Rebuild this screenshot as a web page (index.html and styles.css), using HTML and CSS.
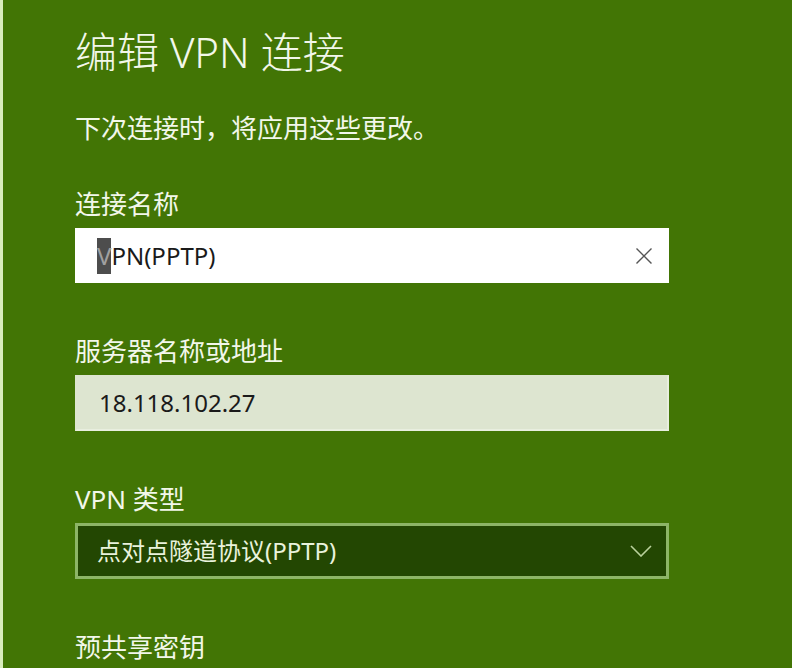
FILE: index.html
```html
<!DOCTYPE html>
<html lang="zh-CN">
<head>
<meta charset="utf-8">
<link rel="stylesheet" href="styles.css">
</head>
<body>
<div class="panel">
  <h1 class="title">编辑 VPN 连接</h1>
  <p class="subtitle">下次连接时，将应用这些更改。</p>

  <div class="field">
    <div class="label">连接名称</div>
    <div class="input input-active">
      <span class="value"><span class="caret">V</span>PN(PPTP)</span>
      <svg class="clear" width="18" height="18" viewBox="0 0 18 18"><path d="M1.5 1.5 L16.5 16.5 M16.5 1.5 L1.5 16.5" stroke="#555" stroke-width="1.4" fill="none"/></svg>
    </div>
  </div>

  <div class="field">
    <div class="label">服务器名称或地址</div>
    <div class="input input-filled">
      <span class="value">18.118.102.27</span>
    </div>
  </div>

  <div class="field">
    <div class="label">VPN 类型</div>
    <div class="input select">
      <span class="value">点对点隧道协议(PPTP)</span>
      <svg class="chev" width="22" height="12" viewBox="0 0 22 12"><path d="M1 1 L11 11 L21 1" stroke="#b9d19c" stroke-width="1.6" fill="none"/></svg>
    </div>
  </div>

  <div class="field">
    <div class="label">预共享密钥</div>
  </div>
</div>
</body>
</html>
```
FILE: styles.css
```css
html, body {
  margin: 0;
  padding: 0;
  height: 100%;
  overflow: hidden;
}
body {
  background: #427505;
  font-family: "Noto Sans", "Noto Sans CJK SC", sans-serif;
  color: #f2f7ea;
}
.panel {
  height: 100%;
  border-left: 3px solid #d9ecbd;
  padding: 0 0 0 72px;
  width: 670px;
  box-sizing: content-box;
}
.title {
  margin: 0;
  padding-top: 28px;
  font-size: 42px;
  line-height: 48px;
  font-weight: 300;
  letter-spacing: 0;
}
.subtitle {
  margin: 37px 0 0;
  font-size: 26px;
  line-height: 30px;
  font-weight: 400;
}
.field {
  margin-top: 46px;
}
.field + .field {
  margin-top: 53px;
}
.label {
  font-size: 26px;
  line-height: 30px;
  margin-bottom: 9px;
}
.input {
  width: 594px;
  height: 55px;
  box-sizing: border-box;
  display: flex;
  align-items: center;
  padding: 0 16px 0 22px;
  font-size: 24px;
}
.value {
  flex: 1;
  line-height: 32px;
}
.input-active {
  background: #ffffff;
  color: #1a1a1a;
}
.caret {
  background: #4d4d4d;
  color: #a0a0a0;
  display: inline-block;
  line-height: 36px;
}
.input-filled {
  background: #dde5d0;
  color: #1a1a1a;
  border: 2px solid #e8eedf;
  border-top-color: #dde5d0;
  border-left-color: #dde5d0;
  height: 56px;
}
.select {
  background: #234702;
  border: 3px solid #8db567;
  color: #e9f2dc;
  height: 56px;
  padding-left: 19px;
  padding-right: 14px;
}
```
